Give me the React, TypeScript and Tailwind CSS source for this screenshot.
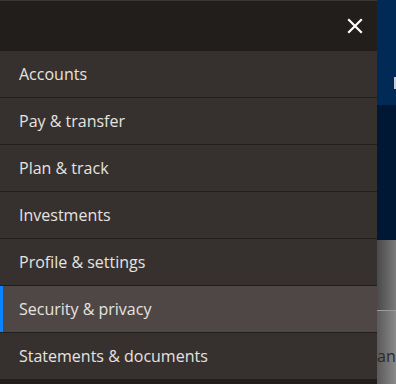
const items = [
  'Accounts',
  'Pay & transfer',
  'Plan & track',
  'Investments',
  'Profile & settings',
  'Security & privacy',
  'Statements & documents',
];

// Menú lateral abierto sobre la página.
export default function App() {
  const activo = 'Security & privacy';
  return (
    <div className="flex h-[384px] w-[396px] overflow-hidden bg-[#221e1b]" style={{ fontFamily: '"Open Sans", "Noto Sans", sans-serif' }}>
      <nav className="flex w-[377px] shrink-0 flex-col border-t border-[#3a3735] bg-[#221e1b]">
        <div className="flex h-[50px] items-center justify-end pr-[10px]">
          <button className="flex h-6 w-6 items-center justify-center text-white" aria-label="Close">
            <svg width="16" height="16" viewBox="0 0 16 16" fill="none" stroke="currentColor" strokeWidth="2.2" strokeLinecap="square">
              <path d="M2 2L14 14M14 2L2 14" />
            </svg>
          </button>
        </div>
        <ul>
          {items.map((item) => (
            <li
              key={item}
              className={`relative flex h-[47px] items-center border-b border-[#221e1b] pl-[19px] text-[16px] text-[#e6e3e0] ${
                item === activo ? 'bg-[#4e4745]' : 'bg-[#36312e]'
              }`}
            >
              {item === activo && <span className="absolute top-0 bottom-0 left-0 w-[3px] bg-[#0a84ff]" />}
              {item}
            </li>
          ))}
        </ul>
      </nav>
      <div className="flex flex-1 flex-col">
        <div className="relative h-[105px] bg-[#012a57]">
          <span className="absolute top-[77px] right-0 h-[12px] w-[2px] bg-[#c9ced6]" />
        </div>
        <div className="h-[135px] bg-[#001833]" />
        <div className="h-[70px] bg-gradient-to-r from-[#4a4a4a] to-[#7a7a7a]" />
        <div className="h-px bg-[#9a9a9a]" />
        <div className="flex flex-1 items-end bg-gradient-to-r from-[#5a5a5a] to-[#8a8a8a] pb-[16px]">
          <span className="text-[16px] text-[#2a2a2a]">an</span>
        </div>
      </div>
    </div>
  );
}
